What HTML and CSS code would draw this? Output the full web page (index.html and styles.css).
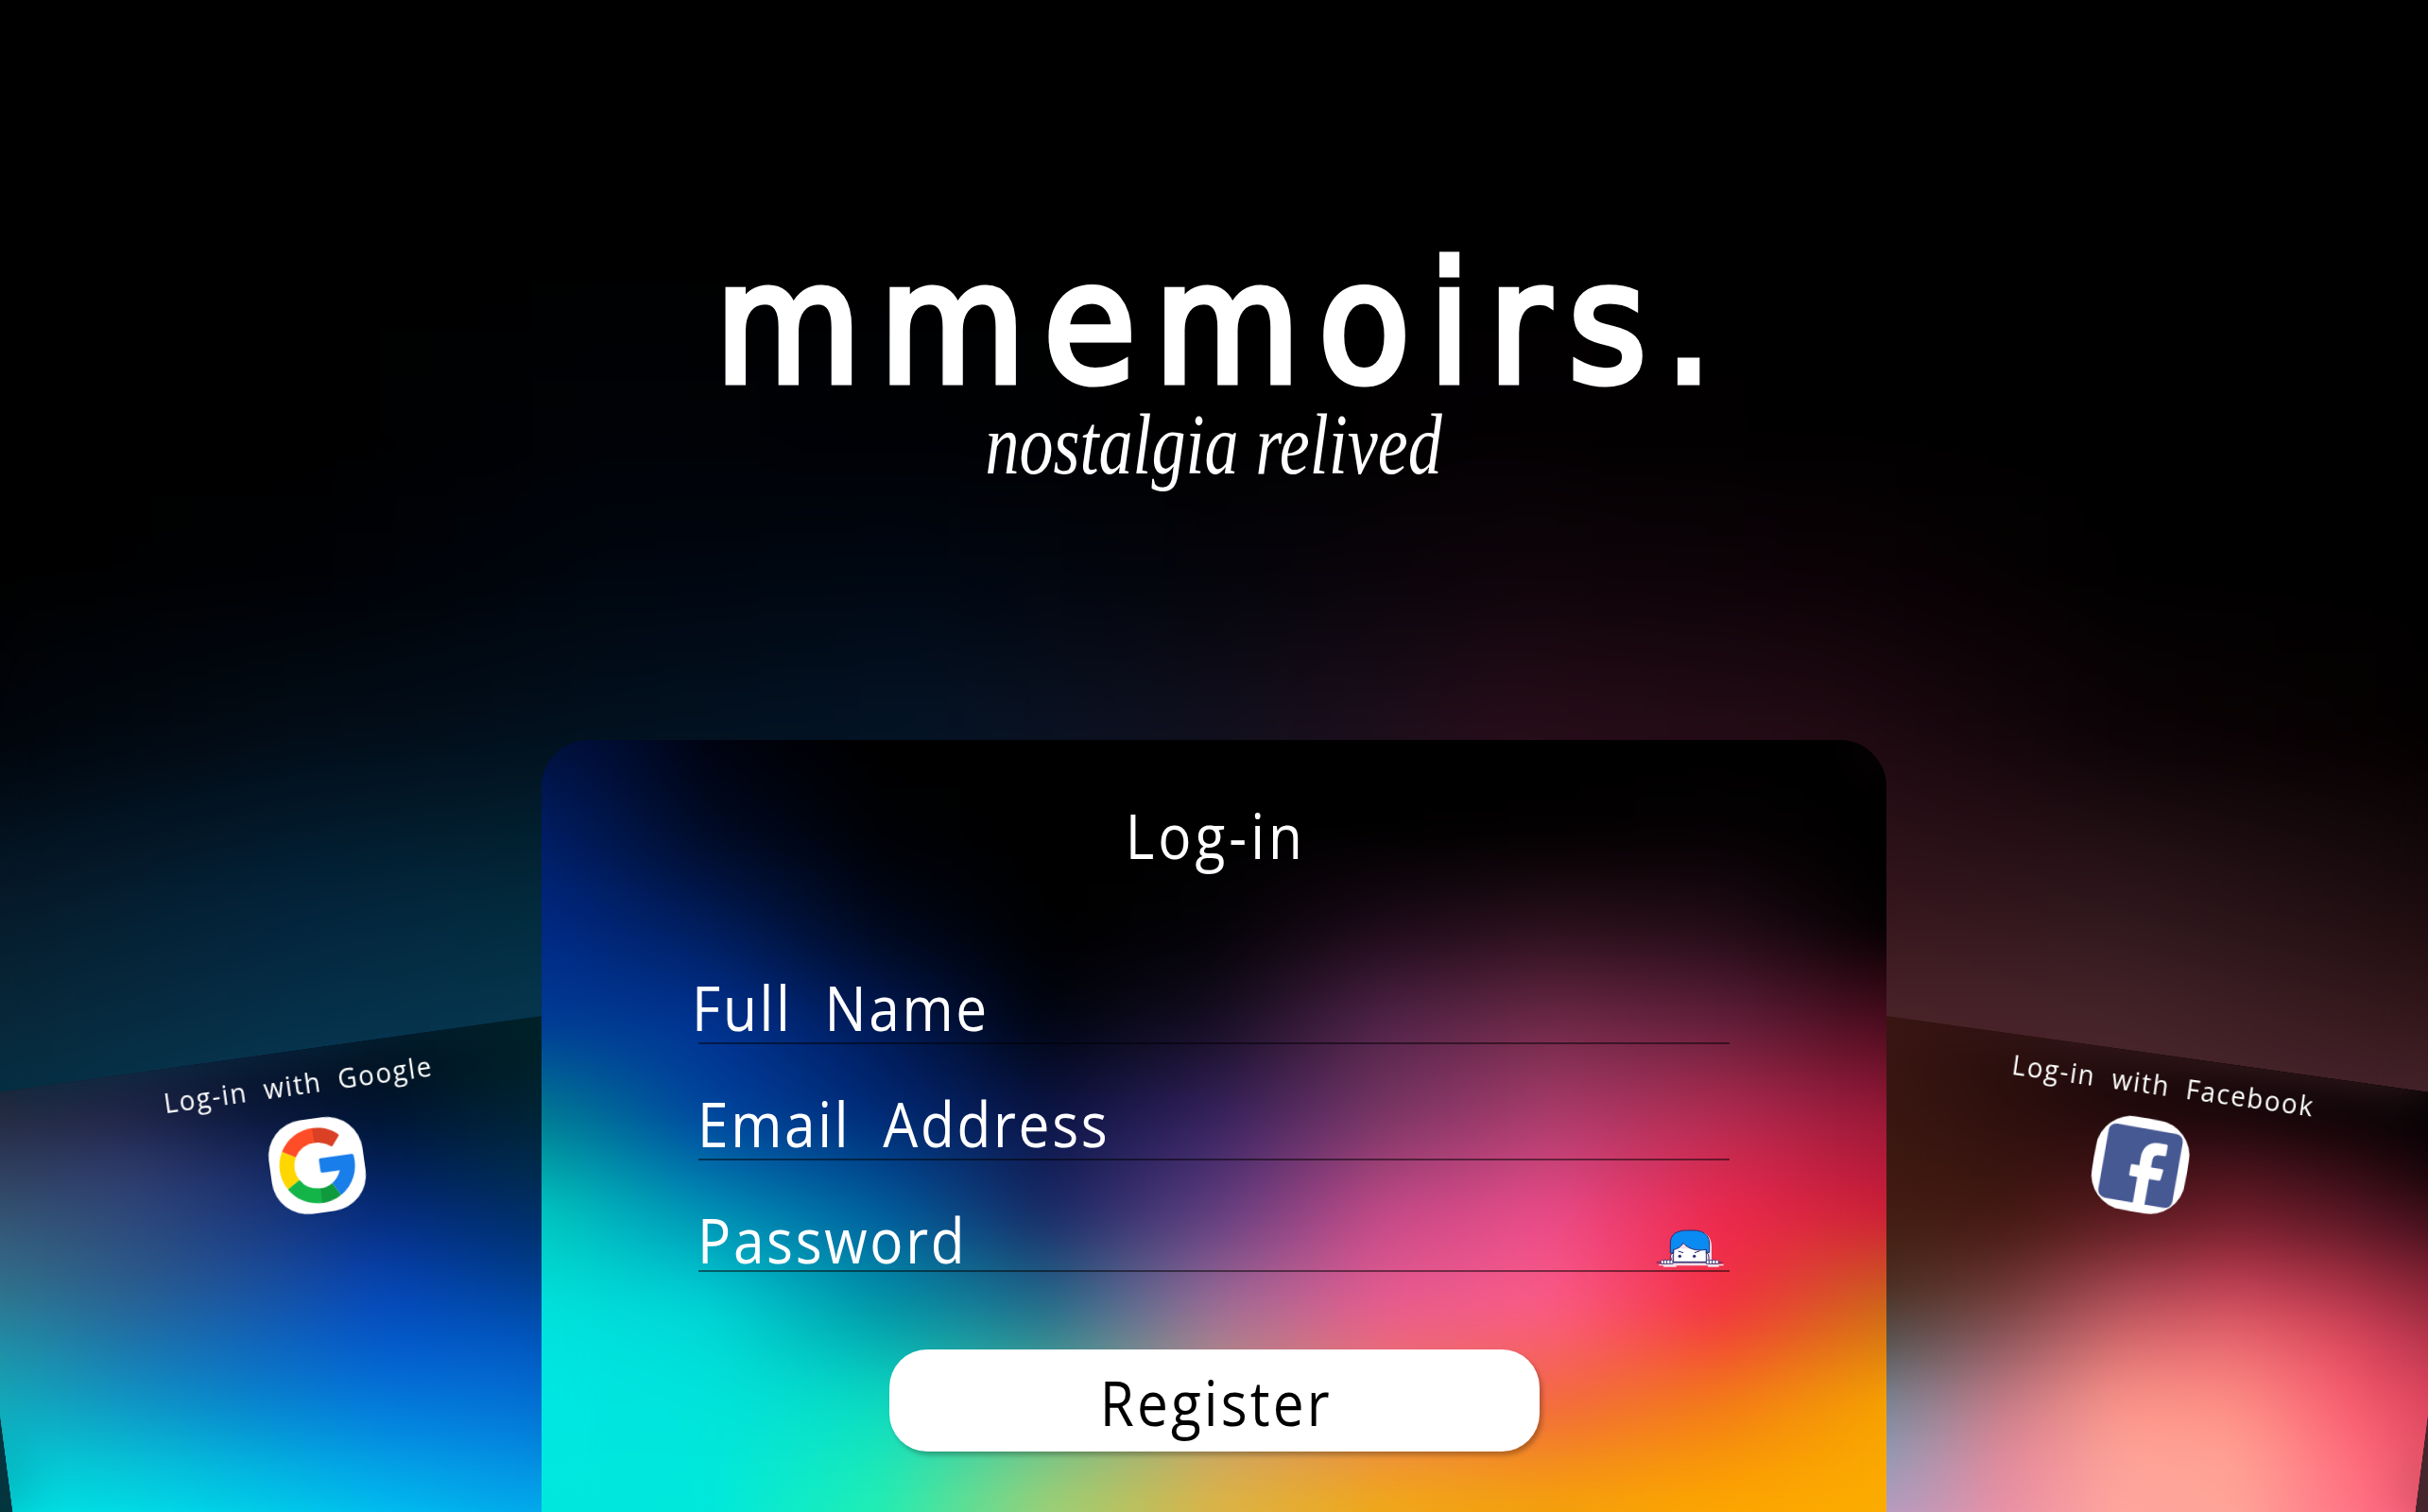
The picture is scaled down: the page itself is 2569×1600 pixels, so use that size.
FILE: index.html
```html
<!DOCTYPE html>
<html lang="en">
<head>
<meta charset="utf-8">
<title>mmemoirs.</title>
<link rel="stylesheet" href="styles.css">
</head>
<body>
<div class="page">
  <div class="mesh mesh-page"><i></i><i></i><i></i><i></i><i></i><i></i><i></i><i></i></div>

  <div class="content">
    <header class="brand">
      <h1 class="brand-name">mmemoirs.</h1>
      <p class="brand-tagline"><span>nostalgia relived</span></p>
    </header>

    <main class="cards">
      <section class="provider provider-google">
        <div class="mesh"><i></i><i></i><i></i><i></i><i></i><i></i><i></i><i></i><i></i><i></i></div>
        <a class="provider-link">
          <span class="provider-label">Log-in with Google</span>
          <svg class="provider-icon" viewBox="-50 -50 100 100">
            <rect x="-50" y="-50" width="100" height="100" rx="38" fill="#fff"/>
            <path fill="#d94024" d="M0-40C10-40 18.500-37 26-30.500Q27.600-29.500 26.700-28L19-18.500Q18-17.500 16.500-18.800Q9-24.300 0-24.300Z"/>
            <path fill="#ff4d27" d="M0-40A40 40 0 0 0-35-19.400L-21.300-11.800A24.300 24.300 0 0 1 0-24.300Z"/>
            <path fill="#ffd600" d="M-35-19.400A40 40 0 0 0-34.200 20.700L-20.700 12.600A24.300 24.300 0 0 1-21.300-11.800Z"/>
            <path fill="#14b548" d="M-34.200 20.700A40 40 0 0 0 0 40V24.300A24.300 24.300 0 0 1-20.700 12.600Z"/>
            <path fill="#109a3e" d="M0 40A40 40 0 0 0 20.800 34.200L13.200 20.400A24.300 24.300 0 0 1 0 24.300Z"/>
            <path fill="#187ee9" d="M20.800 34.200A40 40 0 0 0 39.600-5.500Q39.500-7.300 37.800-7.300H4.500Q2.600-7.300 2.600-5.400V6.300Q2.600 8.200 4.500 8.200H23Q19.500 16.500 13.200 20.400Z"/>
          </svg>
        </a>
      </section>

      <section class="login">
        <div class="mesh"><i></i><i></i><i></i><i></i><i></i><i></i><i></i><i></i><i></i></div>
        <form class="form">
          <h2 class="form-title"><span class="narrow">Log-in</span></h2>
          <div class="field field-name"><span class="narrow">Full Name</span></div>
          <div class="field field-email"><span class="narrow">Email Address</span></div>
          <div class="field field-password">
            <span class="narrow">Password</span>
            <svg class="peek" viewBox="40 30 225 126">
              <path fill="#f3dfe8" d="M92 140V78C92 46 116 36 148 36H162C196 36 216 56 217 84V143H255V148H240V152H205V148H105V152H64V148H50V144Z"/>
              <path fill="#fff" d="M94 94H200V138H94Z"/>
              <path fill="#0a8bf2" stroke="#2d2b6e" stroke-width="3" d="M86 108V76C86 48 108 36 138 36H160C192 36 210 52 210 78V106L200 108V97C168 103 142 94 127 76C119 90 106 96 96 97V108Z"/>
              <path fill="#fff" stroke="#2d2b6e" stroke-width="3" d="M95 108Q86 110 86 120V131M201 108Q208 110 208 120V131"/>
              <path fill="none" stroke="#2d2b6e" stroke-width="3" d="M96 97V136H200V98M111 102L127 107M163 107L180 101M42 138H252"/>
              <circle cx="116" cy="118" r="5" fill="#2d2b6e"/><circle cx="162" cy="118" r="5" fill="#2d2b6e"/>
              <path fill="#fff" stroke="#2d2b6e" stroke-width="2.600" d="M56 142V134Q60 128 65 132Q70 127 75 132Q80 127 85 132Q90 127 94 134V142ZM65 132V142M75 132V142M85 132V142M200 142V134Q204 128 209 132Q214 127 219 132Q224 127 229 132Q234 127 239 134V142ZM209 132V142M219 132V142M229 132V142"/>
            </svg>
          </div>
          <button class="register" type="button"><span class="narrow">Register</span></button>
        </form>
      </section>

      <section class="provider provider-facebook">
        <div class="mesh"><i></i><i></i><i></i><i></i><i></i><i></i><i></i><i></i><i></i><i></i></div>
        <a class="provider-link">
          <span class="provider-label">Log-in with Facebook</span>
          <svg class="provider-icon" viewBox="-50 -50 100 100">
            <rect x="-50" y="-50" width="100" height="100" rx="38" fill="#fff"/>
            <rect x="-39.500" y="-39" width="79.500" height="79.500" rx="8" fill="#475993"/>
            <path fill="#fff" d="M-1.100 41V13H-8.500Q-10 13-10 11.500V2Q-10 .5-8.500 .5H-1.100V-8C-1.100-19 5-26 15.500-26H23.500Q25-26 25-24.500V-15Q25-13.500 23.500-13.500H18.500C13-13.500 11.500-11 11.500-6.500V.5H23.500Q25 .5 24.800 2L23.700 11.500Q23.500 13 22 13H11.500V41Z"/>
          </svg>
        </a>
      </section>
    </main>
  </div>
</div>
</body>
</html>
```
FILE: styles.css
```css
* { box-sizing: border-box; }

body {
  margin: 0;
  background: #000;
  color: #fff;
  font-family: "Open Sans", "Noto Sans", sans-serif;
}

.page {
  display: grid;
  width: 2569px;
  height: 1600px;
  overflow: hidden;
}

.page > *,
.provider > *,
.login > *,
.mesh > i,
.mesh::after { grid-area: 1 / 1; }

.content {
  position: relative;
  display: flex;
  flex-direction: column;
  min-width: 0;
}

/* Mesh gradients: each row fades in over the one above it, then the whole is softened. */
.mesh {
  display: grid;
  isolation: isolate;
  overflow: hidden;
  --step: 60px;
}
.mesh > i {
  background: linear-gradient(to right, var(--row));
  -webkit-mask-image: linear-gradient(to bottom, transparent var(--from), #000 var(--to));
  mask-image: linear-gradient(to bottom, transparent var(--from), #000 var(--to));
  --from: calc((var(--i) - 1) * var(--step));
  --to: calc(var(--i) * var(--step));
}
.mesh > i:nth-child(1) { --i: 0; }
.mesh > i:nth-child(2) { --i: 1; }
.mesh > i:nth-child(3) { --i: 2; }
.mesh > i:nth-child(4) { --i: 3; }
.mesh > i:nth-child(5) { --i: 4; }
.mesh > i:nth-child(6) { --i: 5; }
.mesh > i:nth-child(7) { --i: 6; }
.mesh > i:nth-child(8) { --i: 7; }
.mesh > i:nth-child(9) { --i: 8; }
.mesh > i:nth-child(10) { --i: 9; }
.mesh::after {
  content: "";
  z-index: 1;
  backdrop-filter: blur(26px);
}

.mesh-page > i:nth-child(1) { --row: #000, #000; }
.mesh-page > i:nth-child(2) { --from: 250px; --to: 450px; --row: #000, #000, #000206, #000104, #000, #030002, #010000, #000, #000; }
.mesh-page > i:nth-child(3) { --from: 450px; --to: 600px; --row: #000, #000104, #00060f, #000712, #04040a, #0e040a, #0b0206, #010000, #000; }
.mesh-page > i:nth-child(4) { --from: 600px; --to: 780px; --row: #01050c, #020d18, #02111f, #041426, #12101f, #280e1a, #220b14, #0c0306, #040000; }
.mesh-page > i:nth-child(5) { --from: 780px; --to: 950px; --row: #061a2a, #03233a, #022c3c, #041426, #12101f, #280e1a, #35141c, #2c161b, #1a0b0e; }
.mesh-page > i:nth-child(6) { --from: 950px; --to: 1080px; --row: #082839, #06304a, #063850, #041426, #12101f, #280e1a, #4c2429, #45242a, #33171b; }
.mesh-page > i:nth-child(7) { --from: 1080px; --to: 1150px; --row: #062e42, #083853, #063850, #041426, #12101f, #280e1a, #4c2429, #49262c, #43222a; }
.mesh-page > i:nth-child(8) { --from: 1150px; --to: 1600px; --row: #04363f, #04363f, #063850, #041426, #12101f, #280e1a, #4c2429, #46262e, #46262e; }

.brand {
  display: flex;
  flex-direction: column;
  align-items: center;
  height: 783px;
  padding-top: 269px;
  text-align: center;
}
.brand-name {
  margin: 0 -19px 0 0;
  font: 400 176px/150px "DejaVu Sans Condensed", "DejaVu Sans", sans-serif;
  font-stretch: condensed;
  letter-spacing: 19.500px;
  -webkit-text-stroke: 7px #fff;
}
.brand-tagline {
  margin: 2px 0 0;
  font: italic 90px/100px "Liberation Serif", serif;
}
.brand-tagline span {
  display: inline-block;
  transform: scaleX(0.8);
}

.cards {
  display: grid;
  grid-template-columns: 573px 1423px 573px;
  align-items: end;
  height: 817px;
}

.login {
  display: grid;
  height: 817px;
  border-radius: 50px 50px 0 0;
  overflow: hidden;
}
.login .mesh { --step: 100px; }
.login .mesh > i:nth-child(1) { --row: #001145, #00040f, #000, #000, #000, #000, #000, #000, #000; }
.login .mesh > i:nth-child(2) { --row: #001f66, #000a24, #000104, #000, #000, #000, #020001, #050103, #000; }
.login .mesh > i:nth-child(3) { --row: #002a86, #001d5c, #00081c, #000, #030206, #1c0a18, #2a101b, #220c16, #020001; }
.login .mesh > i:nth-child(4) { --row: #003c96, #003394, #001a58, #00040f, #150e22, #52244a, #702a48, #64203c, #4a0c1e; }
.login .mesh > i:nth-child(5) { --row: #007f92, #0044a0, #002a78, #0a1445, #352260, #7a3766, #ad3d6e, #b62c52, #9a1838; }
.login .mesh > i:nth-child(6) { --row: #00c8c0, #0090b4, #005ea0, #182764, #5f3d80, #c44a88, #ec4b8a, #f0284e, #cc1d38; }
.login .mesh > i:nth-child(7) { --row: #00e2dc, #00d6d6, #0096a8, #226c8c, #9e6e98, #ea5c92, #fc5c88, #f43042, #ca6a18; }
.login .mesh > i:nth-child(8) { --row: #00e6e2, #00e4dc, #08dcc4, #50b898, #bb9a80, #ec7860, #f2673f, #f27a18, #f6a400; }
.login .mesh > i:nth-child(9) { --row: #00e8de, #00e8dc, #20eeb4, #9cd076, #dcb446, #f0a818, #f4a00c, #fca600, #fcac00; }

.narrow {
  display: inline-block;
  transform: scaleX(0.9);
  transform-origin: 0 0;
}

.form {
  position: relative;
  display: flex;
  flex-direction: column;
  width: 1091px;
  margin-left: 166px;
  padding-top: 57px;
}
.form-title {
  margin: 0 0 96px;
  font-size: 65px;
  font-weight: 400;
  line-height: 88px;
  letter-spacing: 4.500px;
  text-align: center;
}
.form-title .narrow,
.register .narrow { margin-right: -3px; transform-origin: 50% 0; }
.field {
  display: flex;
  justify-content: space-between;
  height: 81px;
  margin-bottom: 42px;
  border-bottom: 2px solid rgba(0, 0, 0, 0.5);
  font-size: 65px;
  font-weight: 400;
  line-height: 84px;
  letter-spacing: 3px;
  word-spacing: 18px;
}
.field-name .narrow { margin-left: -7px; }
.field-email .narrow { margin-left: -1px; }
.field-password {
  height: 76px;
  margin-bottom: 82px;
}
.field-password .narrow { margin-left: -1px; }
.peek {
  width: 75px;
  height: 42px;
  margin: 30px 3px 0 0;
}
.register {
  width: 688px;
  height: 108px;
  margin-left: 202px;
  padding: 4px 0 0;
  border: 0;
  border-radius: 40px;
  background: #fff;
  box-shadow: 3px 4px 5px rgba(0, 0, 0, 0.25);
  color: #000;
  font: 400 65px/104px "Open Sans", "Noto Sans", sans-serif;
  letter-spacing: 3.500px;
}

.provider {
  display: grid;
  height: 540px;
}
.provider-google { clip-path: polygon(0 95.700px, 573px 15.200px, 573px 540px, 13.700px 540px, 0 436px); }
.provider-facebook { clip-path: polygon(573px 95.700px, 0 15.200px, 0 540px, 559.300px 540px, 573px 436px); }

.provider-google .mesh > i:nth-child(1),
.provider-google .mesh > i:nth-child(2) { --row: #1c1c2c, #181830, #0a1022, #00101c, #001e25, #003036; }
.provider-google .mesh > i:nth-child(3) { --row: #262a40, #202446, #08163a, #001430, #002236, #00343c; }
.provider-google .mesh > i:nth-child(4) { --row: #30405e, #303c70, #1c2c66, #00205c, #002a50, #003844; }
.provider-google .mesh > i:nth-child(5) { --row: #365a78, #2e4c7c, #1c3c82, #06308a, #002f74, #003e56; }
.provider-google .mesh > i:nth-child(6) { --row: #32708a, #2c5c8c, #1c509c, #0644b4, #00429a, #004270; }
.provider-google .mesh > i:nth-child(7) { --row: #228ea4, #1e74aa, #1066bc, #0458cc, #0258c4, #004f9c; }
.provider-google .mesh > i:nth-child(8) { --row: #14a8b8, #1092c4, #0880cc, #0476da, #0470d6, #0460b8; }
.provider-google .mesh > i:nth-child(9) { --row: #06c6d0, #08bcd2, #04aadc, #0498e4, #048ce0, #067cd4; }
.provider-google .mesh > i:nth-child(10) { --row: #00e4e4, #00e2e8, #00d4ea, #00c4f0, #02b2ee, #0a9ce6; }

.provider-facebook .mesh > i:nth-child(1),
.provider-facebook .mesh > i:nth-child(2) { --row: #3a1613, #280e0c, #1a0808, #0c0404, #040202, #020000; }
.provider-facebook .mesh > i:nth-child(3) { --row: #3a1812, #2e100e, #220a0c, #16060a, #080204, #000; }
.provider-facebook .mesh > i:nth-child(4) { --row: #401a12, #38140f, #3c1014, #4c141c, #340c14, #040106; }
.provider-facebook .mesh > i:nth-child(5) { --row: #441f13, #461a14, #641e24, #7c2030, #621a28, #360b17; }
.provider-facebook .mesh > i:nth-child(6) { --row: #4a2e20, #6a3430, #a44450, #c23f54, #a83044, #6e1a2c; }
.provider-facebook .mesh > i:nth-child(7) { --row: #545450, #8e5a60, #d86c70, #ec6a70, #e0485e, #982840; }
.provider-facebook .mesh > i:nth-child(8) { --row: #748494, #c47a86, #fc9488, #fe8c84, #f85a6e, #c43450; }
.provider-facebook .mesh > i:nth-child(9) { --row: #8c9cb8, #e4889a, #ffa498, #ffa294, #ff6c7a, #ea4464; }
.provider-facebook .mesh > i:nth-child(10) { --row: #b89cc2, #ea92a8, #ffa69e, #ffa498, #ff7488, #fa4c6c; }

.provider-link {
  z-index: 1;
  display: flex;
  flex-direction: column;
  align-items: center;
  height: 200px;
  margin-top: 102px;
}
.provider-label {
  font-size: 30px;
  font-weight: 400;
  line-height: 64px;
  letter-spacing: 1.900px;
  word-spacing: 9px;
  white-space: nowrap;
  transform: scaleX(0.92);
}
.provider-icon {
  flex: none;
  width: 100px;
  height: 100px;
}
.provider-google .provider-link {
  width: 722px;
  margin-left: -47px;
  padding-top: 4px;
  transform: rotate(-8deg);
  transform-origin: 0 0;
}
.provider-google .provider-icon { margin: 6px 0 0 16px; }
.provider-facebook .provider-link {
  width: 652px;
  margin-left: -32px;
  transform: rotate(8deg);
  transform-origin: 100% 0;
}
.provider-facebook .provider-icon {
  margin: 5px 24px 0 0;
  transform: rotate(2deg);
}
```
